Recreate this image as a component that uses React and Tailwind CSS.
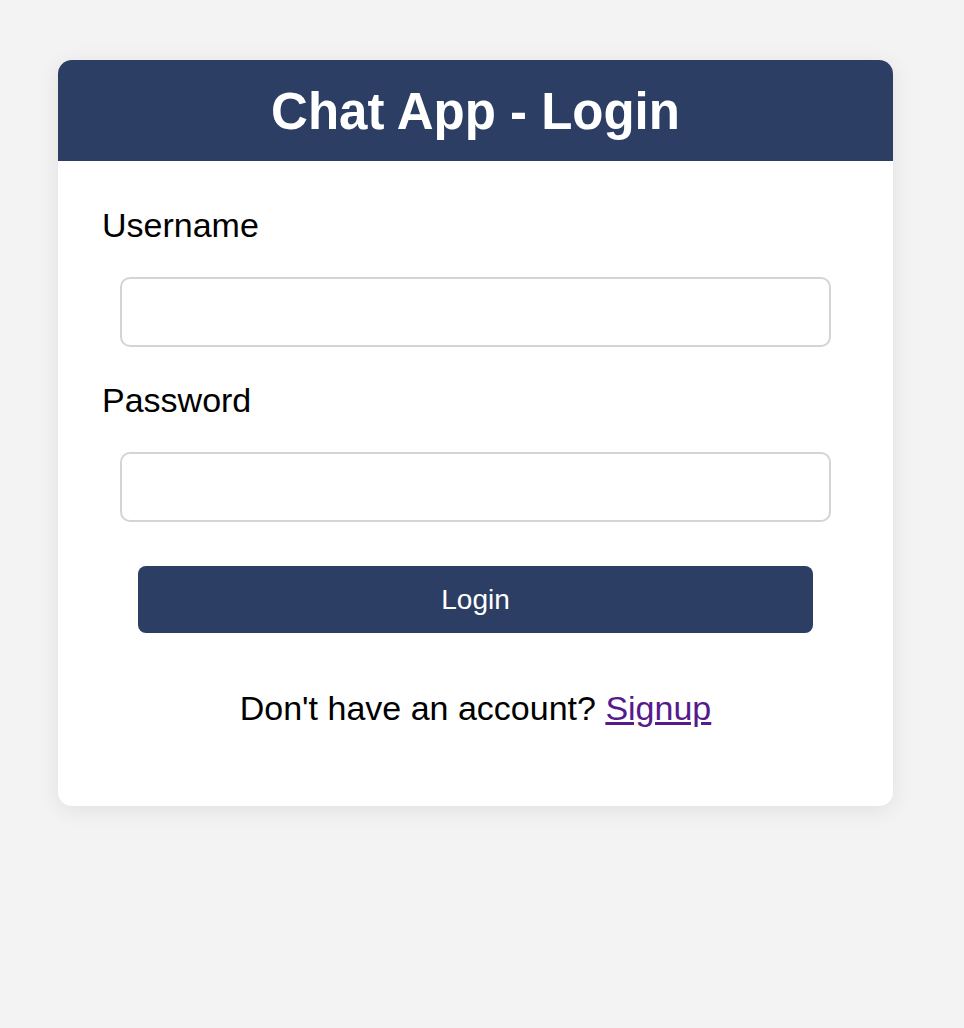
export default function App() {
  return (
    <div className="min-h-[1028px] w-full bg-[#f3f3f3] pt-[60px] pl-[58px]" style={{ fontFamily: '"Liberation Sans", Arial, sans-serif' }}>
      <div className="w-[835px] overflow-hidden rounded-[14px] bg-white shadow-[0_4px_22px_rgba(0,0,0,0.08)]">
        <div className="flex h-[101px] items-center justify-center bg-[#2c3e63] pt-[2px]">
          <h2 className="text-[51px] font-bold leading-none text-white">Chat App - Login</h2>
        </div>
        <div className="flex flex-col px-[44px] pt-[45px] pb-[78px]">
          <label className="text-[34px] leading-[38px] text-black">Username</label>
          <div className="mt-[33px] px-[18px]">
            <input type="text" className="block h-[70px] w-full rounded-[10px] border-2 border-[#d4d4d4] bg-white outline-none" />
          </div>
          <label className="mt-[34px] text-[34px] leading-[38px] text-black">Password</label>
          <div className="mt-[33px] px-[18px]">
            <input type="password" className="block h-[70px] w-full rounded-[10px] border-2 border-[#d4d4d4] bg-white outline-none" />
          </div>
          <div className="mt-[44px] px-[36px]">
            <button className="flex h-[67px] w-full items-center justify-center rounded-[8px] bg-[#2c3e63] text-[28px] text-white">Login</button>
          </div>
          <p className="mt-[56px] text-center text-[34px] leading-[39px] text-black">
            Don't have an account? <a href="#" className="text-[#551a8b] underline">Signup</a>
          </p>
        </div>
      </div>
    </div>
  );
}
